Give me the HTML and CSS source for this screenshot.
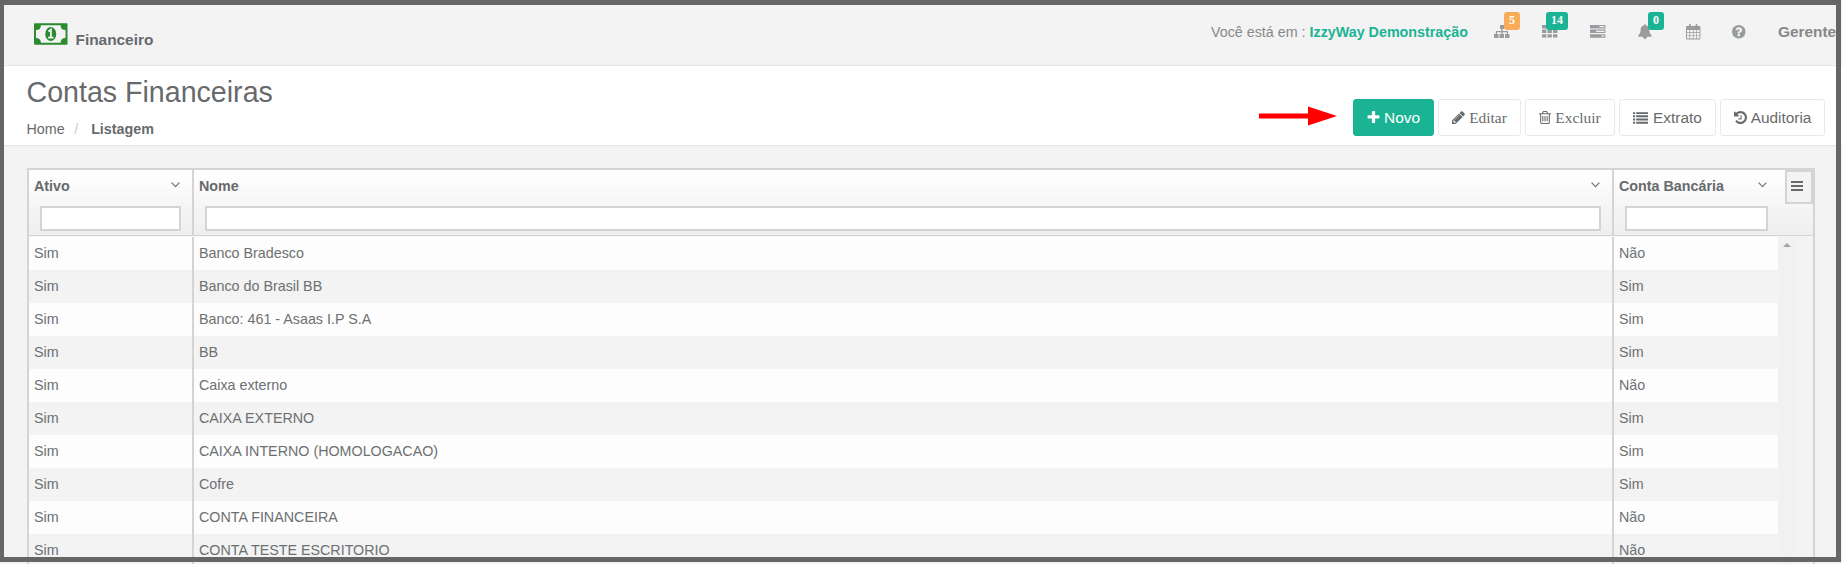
FILE: index.html
```html
<!DOCTYPE html>
<html lang="pt-BR">
<head>
<meta charset="utf-8">
<title>Contas Financeiras</title>
<link rel="stylesheet" href="styles.css">
</head>
<body>
<header class="topbar">
  <div class="brand">
    <svg class="money" viewBox="0 0 34 22"><path fill="#2a8c2e" fill-rule="evenodd" d="M1 0h32q1 0 1 1v20q0 1-1 1H1q-1 0-1-1V1q0-1 1-1zM7 2q0 5-5 5v8q5 0 5 5h20q0-5 5-5V7q-5 0-5-5z"/><ellipse cx="17" cy="11" rx="5.6" ry="7.2" fill="#2a8c2e"/><path d="M14.6 8.400l2.600-1.900V14M14.300 14.600h5.600" fill="none" stroke="#f3f3f4" stroke-width="1.800"/></svg>
    <span class="brand-name">Financeiro</span>
  </div>
  <nav class="tools">
    <span class="where">Você está em : <b>IzzyWay Demonstração</b></span>
    <a class="tool"><svg viewBox="0 0 16 14"><path d="M6 0h4v4H8.6v2H14v3h1.5v4H11V9h1.8V7.2H8.6V9H10v4H5.5V9h1.8V7.2H3V9h1.5v4H0V9h1.8V6h5.5V4H6z"/></svg><span class="badge orange">5</span></a>
    <a class="tool"><svg viewBox="0 0 16 14"><path d="M0 0h4.4v3.4H0zM5.5 0h4.4v3.4H5.5zM11 0h4.4v3.4H11zM0 4.6h4.4V8H0zM5.5 4.6h4.4V8H5.5zM11 4.6h4.4V8H11zM0 9.2h4.4v3.4H0zM5.5 9.2h4.4v3.4H5.5zM11 9.2h4.4v3.4H11z"/></svg><span class="badge">14</span></a>
    <a class="tool"><svg viewBox="0 0 16 14"><path fill-rule="evenodd" d="M0 0h15.4v3.5H0zM9.5 1.1v1.2h4.8V1.1zM0 4.6h15.4v3.5H0zM6 5.7v1.2h8.3V5.7zM0 9.2h15.4v3.5H0zM11.5 10.3v1.2h2.8v-1.2z"/></svg></a>
    <a class="tool bell"><svg viewBox="64 0 1792 1792"><path d="M1664 1408q0 52-38 90t-90 38h-448q0 106-75 181t-181 75-181-75-75-181h-448q-52 0-90-38t-38-90q50-42 91-88t85-119.5 74.5-158.5 50-206 19.5-260q0-152 117-282.5t307-158.5q-8-19-8-39 0-40 28-68t68-28 68 28 28 68q0 20-8 39 190 28 307 158.5t117 282.5q0 139 19.5 260t50 206 74.5 158.5 85 119.5 91 88z" transform="translate(64 0)"/></svg><span class="badge">0</span></a>
    <a class="tool cal"><svg viewBox="0 0 15 16"><path fill-rule="evenodd" d="M1 2h2V1q0-1 1-1t1 1v1h4.500V1q0-1 1-1t1 1v1h2q.9 0 .9.9V14.500q0 .9-.9.9H1q-1 0-1-.9V3q0-1 1-1zM1 6v2.300h2.500V6zm3.200 0v2.300h2.700V6zm3.400 0v2.300h2.700V6zM11 6v2.300h2.500V6zM1 9v2.400h2.500V9zm3.200 0v2.400h2.700V9zm3.400 0v2.400h2.700V9zM11 9v2.400h2.500V9zM1 12.100v2.300h2.500v-2.300zm3.200 0v2.300h2.700v-2.300zm3.400 0v2.300h2.700v-2.300zm3.400 0v2.300h2.500v-2.300z"/></svg></a>
    <a class="tool help"><svg viewBox="128 128 1536 1536"><path d="M1024 1376v-192q0-14-9-23t-23-9h-192q-14 0-23 9t-9 23v192q0 14 9 23t23 9h192q14 0 23-9t9-23zm256-672q0-88-55.500-163t-138.500-116-170-41q-243 0-371 213-15 24 8 42l132 100q7 6 19 6 16 0 25-12 53-68 86-92 34-24 86-24 48 0 85.500 26t37.500 59q0 38-20 61t-68 45q-63 28-115.500 86.500t-52.500 125.500v36q0 14 9 23t23 9h192q14 0 23-9t9-23q0-19 21.500-49.500t54.500-49.500q32-18 49-28.500t46-35 44.500-48 28-60.500 12.500-81zm384 192q0 209-103 385.500t-279.500 279.500-385.500 103-385.500-103-279.500-279.500-103-385.500 103-385.500 279.500-279.500 385.500-103 385.500 103 279.500 279.500 103 385.500z"/></svg></a>
    <b class="user">Gerente</b>
  </nav>
</header>

<section class="heading">
  <div>
    <h2>Contas Financeiras</h2>
    <div class="crumbs"><span>Home</span><span class="sep">/</span><b>Listagem</b></div>
  </div>
  <div class="actions">
    <svg class="arrow" viewBox="0 0 78 20"><path d="M0 7.500h49V.5l29 9.500-29 9.500v-7H0z" fill="#f00"/></svg>
    <a class="btn primary"><svg viewBox="190 128 1410 1536"><path d="M1600 736v192q0 40-28 68t-68 28h-416v416q0 40-28 68t-68 28h-192q-40 0-68-28t-28-68v-416h-416q-40 0-68-28t-28-68v-192q0-40 28-68t68-28h416v-416q0-40 28-68t68-28h192q40 0 68 28t28 68v416h416q40 0 68 28t28 68z"/></svg>Novo</a>
    <a class="btn edit serif"><svg viewBox="128 128 1536 1536"><path d="M491 1536l91-91-235-235-91 91v107h128v128h107zm523-928q0-22-22-22-10 0-17 7l-542 542q-7 7-7 17 0 22 22 22 10 0 17-7l542-542q7-7 7-17zm-54-192l416 416-832 832h-416v-416zm683 96q0 53-37 90l-166 166-416-416 166-165q36-38 90-38 53 0 91 38l235 234q37 39 37 91z"/></svg>Editar</a>
    <a class="btn del serif"><svg viewBox="192 128 1408 1536"><path d="M704 736v576q0 14-9 23t-23 9h-64q-14 0-23-9t-9-23v-576q0-14 9-23t23-9h64q14 0 23 9t9 23zm256 0v576q0 14-9 23t-23 9h-64q-14 0-23-9t-9-23v-576q0-14 9-23t23-9h64q14 0 23 9t9 23zm256 0v576q0 14-9 23t-23 9h-64q-14 0-23-9t-9-23v-576q0-14 9-23t23-9h64q14 0 23 9t9 23zm128 724v-948h-896v948q0 22 7 40.500t14.500 27 10.500 8.500h832q3 0 10.500-8.500t14.500-27 7-40.500zm-672-1076h448l-48-117q-7-9-17-11h-317q-10 2-17 11zm928 32v64q0 14-9 23t-23 9h-96v948q0 83-47 143.500t-113 60.500h-832q-66 0-113-58.500t-47-141.500v-952h-96q-14 0-23-9t-9-23v-64q0-14 9-23t23-9h309l70-167q15-37 54-63t79-26h320q40 0 79 26t54 63l70 167h309q14 0 23 9t9 23z"/></svg>Excluir</a>
    <a class="btn list"><svg viewBox="0 0 15.400 12"><path d="M0 0h2.200v2H0zM3.300 0h12.100v2H3.300zM0 3.300h2.200v2H0zM3.300 3.300h12.100v2H3.300zM0 6.600h2.200v2H0zM3.300 6.600h12.100v2H3.300zM0 9.900h2.200v2H0zM3.300 9.900h12.100v2H3.300z"/></svg>Extrato</a>
    <a class="btn hist"><svg viewBox="128 128 1536 1536"><path d="M1664 896q0 156-61 298t-164 245-245 164-298 61q-172 0-327-72.500t-264-204.500q-7-10-6.500-22.500t8.500-20.500l137-138q10-9 25-9 16 2 23 12 73 95 179 147t225 52q104 0 198.500-40.500t163.500-109.500 109.500-163.500 40.500-198.500-40.500-198.500-109.500-163.500-163.500-109.500-198.500-40.500q-98 0-188 35.500t-160 101.500l137 138q31 30 14 69-17 40-59 40h-448q-26 0-45-19t-19-45v-448q0-42 40-59 39-17 69 14l130 129q107-101 244.500-156.500t284.500-55.500q156 0 298 61t245 164 164 245 61 298zm-640-256v448q0 14-9 23t-23 9h-320q-14 0-23-9t-9-23v-64q0-14 9-23t23-9h224v-352q0-14 9-23t23-9h64q14 0 23 9t9 23z"/></svg>Auditoria</a>
  </div>
</section>

<main class="grid">
  <div class="grid-head">
    <div class="col"><div class="label">Ativo<svg viewBox="0 0 9 6"><path d="M.6.6l3.900 4L8.400.6"/></svg></div><input class="filter" type="text"></div>
    <div class="col"><div class="label">Nome<svg viewBox="0 0 9 6"><path d="M.6.6l3.900 4L8.400.6"/></svg></div><input class="filter" type="text"></div>
    <div class="col"><div class="label">Conta Bancária<svg viewBox="0 0 9 6"><path d="M.6.6l3.900 4L8.400.6"/></svg></div><input class="filter" type="text"></div>
    <div class="menu"><svg viewBox="0 0 12 10"><path d="M0 0h12v2H0zM0 4h12v2H0zM0 8h12v2H0z"/></svg></div>
  </div>
  <div class="grid-body">
    <div class="rows">
      <div class="row"><span>Sim</span><span>Banco Bradesco</span><span>Não</span></div>
      <div class="row"><span>Sim</span><span>Banco do Brasil BB</span><span>Sim</span></div>
      <div class="row"><span>Sim</span><span>Banco: 461 - Asaas I.P S.A</span><span>Sim</span></div>
      <div class="row"><span>Sim</span><span>BB</span><span>Sim</span></div>
      <div class="row"><span>Sim</span><span>Caixa externo</span><span>Não</span></div>
      <div class="row"><span>Sim</span><span>CAIXA EXTERNO</span><span>Sim</span></div>
      <div class="row"><span>Sim</span><span>CAIXA INTERNO (HOMOLOGACAO)</span><span>Sim</span></div>
      <div class="row"><span>Sim</span><span>Cofre</span><span>Sim</span></div>
      <div class="row"><span>Sim</span><span>CONTA FINANCEIRA</span><span>Não</span></div>
      <div class="row"><span>Sim</span><span>CONTA TESTE ESCRITORIO</span><span>Não</span></div>
    </div>
    <div class="scrollbar"><svg viewBox="0 0 8 4"><path d="M0 4l4-4 4 4z"/></svg></div>
  </div>
</main>
<div class="frame"></div>
</body>
</html>
```
FILE: styles.css
```css
* { box-sizing: border-box; }
body {
  margin: 0;
  height: 564px;
  overflow: hidden;
  background: #f3f3f4;
  color: #676a6c;
  font: 14.3px "Liberation Sans", Arial, sans-serif;
  display: flex;
  flex-direction: column;
}
svg { display: block; flex: none; fill: currentColor; }

.topbar {
  height: 66px;
  flex: none;
  display: flex;
  justify-content: space-between;
  border-bottom: 1px solid #e4e5e7;
  font-size: 15.4px;
}
.brand { display: flex; padding: 23px 0 0 34px; gap: 8px; }
.money { width: 33.5px; height: 22px; }
.brand-name { font-weight: bold; line-height: 18px; margin-top: 8px; }
.tools {
  display: flex;
  height: 40px;
  margin-top: 11px;
  width: 631px;
  color: #888;
  white-space: nowrap;
}
.where { width: 283px; flex: none; line-height: 42px; font-size: 14.3px; }
.where b { color: #1ab394; }
.tool { position: relative; width: 48px; flex: none; padding-top: 14px; color: #999c9e; }
.tool svg { width: 16px; height: 14px; }
.tool.bell { padding-top: 13px; }
.tool.bell svg { width: 15px; height: 15px; }
.tool.cal { padding-top: 13px; width: 46px; }
.tool.cal svg { width: 15px; height: 16px; }
.tool.help { width: 46px; }
.tool.help svg { width: 13.5px; height: 13.5px; }
.user { font-size: 15.4px; line-height: 42px; }
.badge {
  position: absolute;
  left: 10px;
  top: 1px;
  height: 18px;
  padding: 0 5px;
  border-radius: 3px;
  background: #1ab394;
  color: #fff;
  font: bold 12px/17px "Liberation Serif", serif;
}
.tool:nth-child(3) .badge { left: 4px; }
.orange { background: #f8ac59; }

.heading {
  height: 80px;
  flex: none;
  padding: 0 17px 0 27px;
  display: flex;
  justify-content: space-between;
  background: #fff;
  border-bottom: 1px solid #e7eaec;
}
h2 { margin: 9px 0 0 -0.5px; font-size: 28.6px; font-weight: 400; line-height: 34px; }
.crumbs { display: flex; margin: 11px 0 0 -0.5px; line-height: 18px; }
.sep { color: #ccc; margin: 0 13px 0 9.5px; }
.actions { display: flex; gap: 4px; margin-top: 33px; }
.arrow { width: 78px; height: 20px; margin: 7px 12px 0 0; }
.btn {
  height: 37px;
  display: flex;
  align-items: center;
  justify-content: center;
  gap: 4px;
  border: 1px solid #e7eaec;
  border-radius: 3px;
  background: #fff;
  font-size: 15.4px;
}
.btn svg { width: 13px; height: 13px; }
.primary { background: #1ab394; border-color: #1ab394; color: #fff; width: 81px; }
.serif { font-family: "Liberation Serif", "Times New Roman", serif; }
.edit { width: 83px; }
.del { width: 90px; }
.del svg { width: 12px; }
.list { width: 97px; gap: 5px; }
.list svg { width: 15px; height: 12px; }
.hist { width: 105px; }

.grid {
  width: 1788px;
  margin: 22px 0 0 27px;
  flex: 1;
  border: 2px solid #d4d4d4;
  border-bottom: 0;
  display: flex;
  flex-direction: column;
}
.grid-head {
  height: 66px;
  flex: none;
  display: grid;
  grid-template-columns: 165px 1420px 171px 28px;
  border-bottom: 1px solid #d4d4d4;
  background: linear-gradient(#fff, #eee);
}
.col { border-right: 2px solid #d4d4d4; padding: 0 11px; }
.col:nth-child(3) { border-right: 0; padding-right: 17px; }
.label {
  display: flex;
  justify-content: space-between;
  margin: 6px 1px 0 -6px;
  font-weight: bold;
  line-height: 20px;
}
.label svg { width: 9px; height: 6px; margin-top: 6px; fill: none; stroke: #777; stroke-width: 1.3; }
.filter {
  display: block;
  width: 100%;
  height: 25px;
  margin-top: 10px;
  border: 2px solid #d4d4d4;
  background: #fff;
  outline: 0;
}
.col:nth-child(-n+2) .filter { width: 141px; }
.col:nth-child(2) .filter { width: 1396px; }
.menu { height: 34px; border: 2px solid #d4d4d4; background: #f3f3f4; padding: 9px 0 0 3.5px; }
.menu svg { width: 12px; height: 10px; }
.grid-body { flex: 1; display: flex; min-height: 0; padding-top: 1px; overflow: hidden; }
.rows { width: 1749px; }
.row {
  display: grid;
  grid-template-columns: 165px 1420px 164px;
  height: 33px;
  line-height: 33px;
  background: #fdfdfd;
  color: #6d7072;
}
.row:nth-child(even) { background: #f3f3f3; }
.row span { padding-left: 5px; border-right: 2px solid #d4d4d4; }
.row span:last-child { border-right: 0; }
.scrollbar { width: 17px; background: #f1f1f1; padding: 6px 0 0 4.5px; color: #a3a3a3; }
.scrollbar svg { width: 8px; height: 4px; }
.frame {
  position: absolute;
  left: 0;
  top: 0;
  width: 1841px;
  height: 562px;
  border: 5px solid #666;
  border-left-width: 4px;
  pointer-events: none;
}
```
